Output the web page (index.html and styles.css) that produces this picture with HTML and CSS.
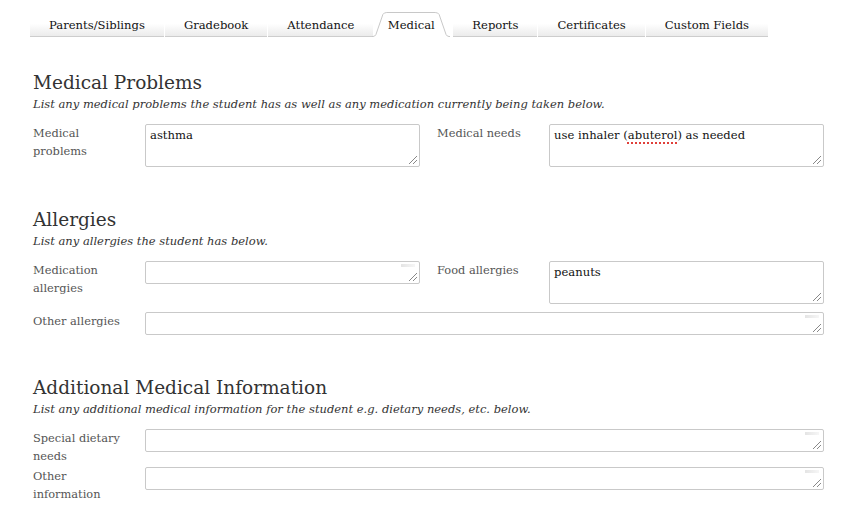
FILE: index.html
```html
<!DOCTYPE html>
<html>
<head>
<meta charset="utf-8">
<link rel="stylesheet" href="styles.css">
</head>
<body>
<nav class="tabs">
  <a class="tab">Parents/Siblings</a>
  <a class="tab">Gradebook</a>
  <a class="tab">Attendance</a>
  <a class="tab active"><svg class="tab-shape" viewBox="0 0 79 26" preserveAspectRatio="none"><path d="M0 25.5 L1 25.5 Q3 25.5 4 23.5 L11 3.5 Q12 1.5 15 1.5 L64 1.5 Q67 1.5 68 3.5 L75 23.5 Q76 25.5 78 25.5 L79 25.5" fill="#fff" stroke="#c8c8c8" stroke-width="1"/></svg><span>Medical</span></a>
  <a class="tab">Reports</a>
  <a class="tab">Certificates</a>
  <a class="tab">Custom Fields</a>
</nav>

<main class="content">
  <section class="section">
    <h2>Medical Problems</h2>
    <p class="hint">List any medical problems the student has as well as any medication currently being taken below.</p>
    <div class="fields">
      <label class="label">Medical problems</label>
      <div class="cell"><div class="box tall" role="textbox">asthma</div></div>
      <label class="label right">Medical needs</label>
      <div class="cell"><div class="box tall" role="textbox">use inhaler (<span class="spell">abuterol</span>) as needed</div></div>
    </div>
  </section>

  <section class="section">
    <h2>Allergies</h2>
    <p class="hint">List any allergies the student has below.</p>
    <div class="fields">
      <label class="label">Medication allergies</label>
      <div class="cell"><div class="box short empty" role="textbox"></div></div>
      <label class="label right">Food allergies</label>
      <div class="cell"><div class="box tall" role="textbox">peanuts</div></div>
      <label class="label">Other allergies</label>
      <div class="cell wide"><div class="box short empty" role="textbox"></div></div>
    </div>
  </section>

  <section class="section">
    <h2>Additional Medical Information</h2>
    <p class="hint">List any additional medical information for the student e.g. dietary needs, etc. below.</p>
    <div class="fields">
      <label class="label">Special dietary needs</label>
      <div class="cell wide"><div class="box short empty" role="textbox"></div></div>
      <label class="label">Other information</label>
      <div class="cell wide"><div class="box short empty" role="textbox"></div></div>
    </div>
  </section>
</main>
</body>
</html>
```

FILE: styles.css
```css
* { box-sizing: border-box; }

body {
  margin: 0;
  background: #fff;
  font-family: "DejaVu Serif", Georgia, serif;
  color: #333;
}

.tabs {
  display: flex;
  gap: 1px;
  margin: 11px 0 0 30px;
}

.tab {
  position: relative;
  display: flex;
  align-items: center;
  justify-content: center;
  height: 26px;
  padding: 2px 19px 0;
  font-size: 11.6px;
  color: #111;
  background: linear-gradient(#fff 0%, #fff 50%, #ebebeb 100%);
  border-bottom: 1px solid #cdcdcd;
}

.tab.active {
  width: 78px;
  margin: 0 2px 0 -2px;
  padding: 2px 0 0;
  background: none;
  border-bottom: none;
}

.tab-shape {
  position: absolute;
  inset: 0;
  width: 100%;
  height: 100%;
}

.tab.active span { position: relative; }

.content {
  width: 791px;
  margin-left: 33px;
  padding-top: 33px;
}

.section { margin-bottom: 34px; }

h2 {
  margin: 0;
  font-size: 18.5px;
  font-weight: normal;
  line-height: 26px;
  color: #333;
}

.hint {
  margin: 0 0 12px;
  font-size: 11.5px;
  font-style: italic;
  line-height: 16px;
  color: #333;
}

.fields {
  display: grid;
  grid-template-columns: 112px 275px 129px 275px;
  row-gap: 2px;
}

.label {
  padding-right: 16px;
  font-size: 11.4px;
  line-height: 18px;
  color: #555;
}

.label.right { padding-left: 17px; }

.cell { display: flex; }
.cell.wide { grid-column: span 3; }

.box {
  position: relative;
  width: 100%;
  margin: 0 0 6px;
  padding: 3px 4px;
  font-size: 11.6px;
  line-height: 15px;
  color: #111;
  background: #fff;
  border: 1px solid #c9c9c9;
  border-radius: 2px;
}

.box.tall { height: 43px; }
.box.short { height: 23px; }

.box::after {
  content: "";
  position: absolute;
  right: 2px;
  bottom: 2px;
  width: 8px;
  height: 8px;
  background: linear-gradient(135deg,
    transparent 0 48%, #888 48% 56%, transparent 56% 72%, #888 72% 80%, transparent 80%);
}

.box.empty::before {
  content: "";
  position: absolute;
  top: 2px;
  right: 4px;
  width: 14px;
  height: 3px;
  background: linear-gradient(90deg, #e4e4e4, #f6f6f6);
}

.spell {
  text-decoration: underline dotted #e0403a;
  text-decoration-thickness: 2px;
  text-underline-offset: 3px;
}
```
